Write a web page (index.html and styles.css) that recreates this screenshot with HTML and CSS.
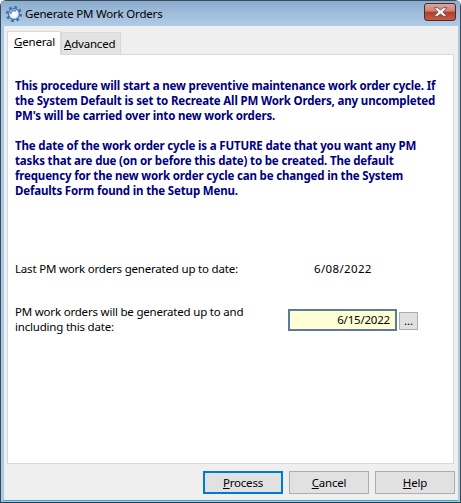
FILE: index.html
```html
<!DOCTYPE html>
<html lang="en">
<head>
<meta charset="utf-8">
<title>Generate PM Work Orders</title>
<link rel="stylesheet" href="styles.css">
</head>
<body>
<div class="window">
  <header class="titlebar">
    <svg class="app-icon" width="18" height="18" viewBox="0 0 18 18">
      <circle cx="9" cy="9" r="6.6" fill="none" stroke="#3f6fb2" stroke-width="3" stroke-dasharray="2.6 2.6"/>
      <circle cx="9" cy="9" r="5.4" fill="#e6eef8" stroke="#3f6fb2" stroke-width="1.2"/>
      <path d="M5.500 9a3.500 3.500 0 0 1 5.500-2.900" fill="none" stroke="#5d8fd0" stroke-width="1.600"/>
      <circle cx="9.500" cy="9.500" r="2.300" fill="#fff"/>
    </svg>
    <span class="title">Generate PM Work Orders</span>
    <button class="close" aria-label="Close">
      <svg width="15" height="10" viewBox="0 0 15 10"><path d="M1 .7h3.600l2.900 2.300L10.400.7H14L9.900 5 14 9.300h-3.600L7.500 7 4.600 9.300H1L5.100 5z" fill="#f2f2f2" stroke="#5a4a4a" stroke-width=".8"/></svg>
    </button>
  </header>
  <div class="client">
    <nav class="tabs">
      <span class="tab active"><u>G</u>eneral</span>
      <span class="tab"><u>A</u>dvanced</span>
    </nav>
    <main class="panel">
      <div class="intro">
        <p>This procedure will start a new preventive maintenance work order cycle. If the System Default is set to Recreate All PM Work Orders, any uncompleted PM's will be carried over into new work orders.</p>
        <p>The date of the work order cycle is a FUTURE date that you want any PM tasks that are due (on or before this date) to be created. The default frequency for the new work order cycle can be changed in the System Defaults Form found in the Setup Menu.</p>
      </div>
      <div class="row-last">
        <span class="label-last">Last PM work orders generated up to date:</span>
        <span class="value-last">6/08/2022</span>
      </div>
      <div class="row-next">
        <span class="label-next">PM work orders will be generated up to and including this date:</span>
        <span class="date-input">6/15/2022</span>
        <button class="picker">...</button>
      </div>
    </main>
    <footer class="actions">
      <button class="btn default"><u>P</u>rocess</button>
      <button class="btn"><u>C</u>ancel</button>
      <button class="btn"><u>H</u>elp</button>
    </footer>
  </div>
</div>
</body>
</html>
```
FILE: styles.css
```css
* { box-sizing: border-box; }
html, body { margin: 0; height: 100%; }
body { font-family: "Noto Sans", "Open Sans", sans-serif; font-size: 11.5px; letter-spacing: -0.2px; color: #000; overflow: hidden; background: #fff; }
.window { width: 461px; height: 503px; display: flex; flex-direction: column; background: #a9c9e8; border: 1px solid #3c4a58; border-bottom-color: #2a3a44; border-radius: 6px 6px 0 0; padding: 0 2px 0; }
.titlebar { height: 25px; flex: none; display: flex; align-items: center; background: linear-gradient(#8aacce 0, #9cbad8 40%, #aecbe7 100%); margin: 0 -2px; padding: 0 4px; }
.app-icon { flex: none; margin-right: 2px; }
.title { flex: 1; }
.close { width: 32px; height: 18px; margin-top: -3px; padding: 0; border: 1px solid #4a2a2a; border-radius: 3px; display: flex; align-items: center; justify-content: center; background: linear-gradient(#dba398 0, #cc8274 45%, #b0402c 50%, #c45a45 100%); }
.client { flex: 1; background: #efefef; display: flex; flex-direction: column; border-left: 1px solid #a9c9e8; min-height: 0; box-shadow: 0 1px 0 0 #22b4dc; margin-bottom: 2px; }
.tabs { height: 28px; flex: none; display: flex; align-items: flex-end; padding: 0 0 0 3px; }
.tab { height: 22px; padding: 3px 3px 0 2px; background: #e3e3e3; border: 1px solid #d9d9d9; border-bottom: 0; width: 60px; }
.tab.active { height: 24px; width: 54px; background: #fff; padding: 2px 0 0 6px; margin-bottom: -1px; position: relative; z-index: 1; }
.panel { height: 410px; margin: 0 4px 0 3px; flex: none; background: #fff; border: 1px solid #d9d9d9; padding: 23px 7px 0 7px; }
.intro { color: #000080; font-weight: 700; line-height: 15px; height: 183px; letter-spacing: -0.16px; }
.intro p { margin: 0 0 15px; }
.row-last { display: flex; height: 43px; }
.label-last { width: 299px; }
.value-last { letter-spacing: 0.35px; }
.row-next { display: flex; align-items: flex-start; }
.label-next { width: 273px; line-height: 15px; }
.date-input { width: 109px; height: 22px; margin-top: 5px; text-align: right; background: #ffffd5; border: 2px solid #5f7a96; padding: 1px 5px 0 0; }
.picker { width: 19px; height: 18px; margin: 8px 0 0 2px; padding: 0; background: #e1e1e1; border: 1px solid #adadad; font: inherit; line-height: 12px; }
.actions { flex: 1; display: flex; justify-content: flex-end; align-items: center; gap: 6px; padding: 0 3px 0 0; }
.btn { width: 80px; height: 23px; padding: 0; background: #e1e1e1; border: 1px solid #adadad; font: inherit; letter-spacing: inherit; }
.btn.default { border: 2px solid #0078d7; }
```
